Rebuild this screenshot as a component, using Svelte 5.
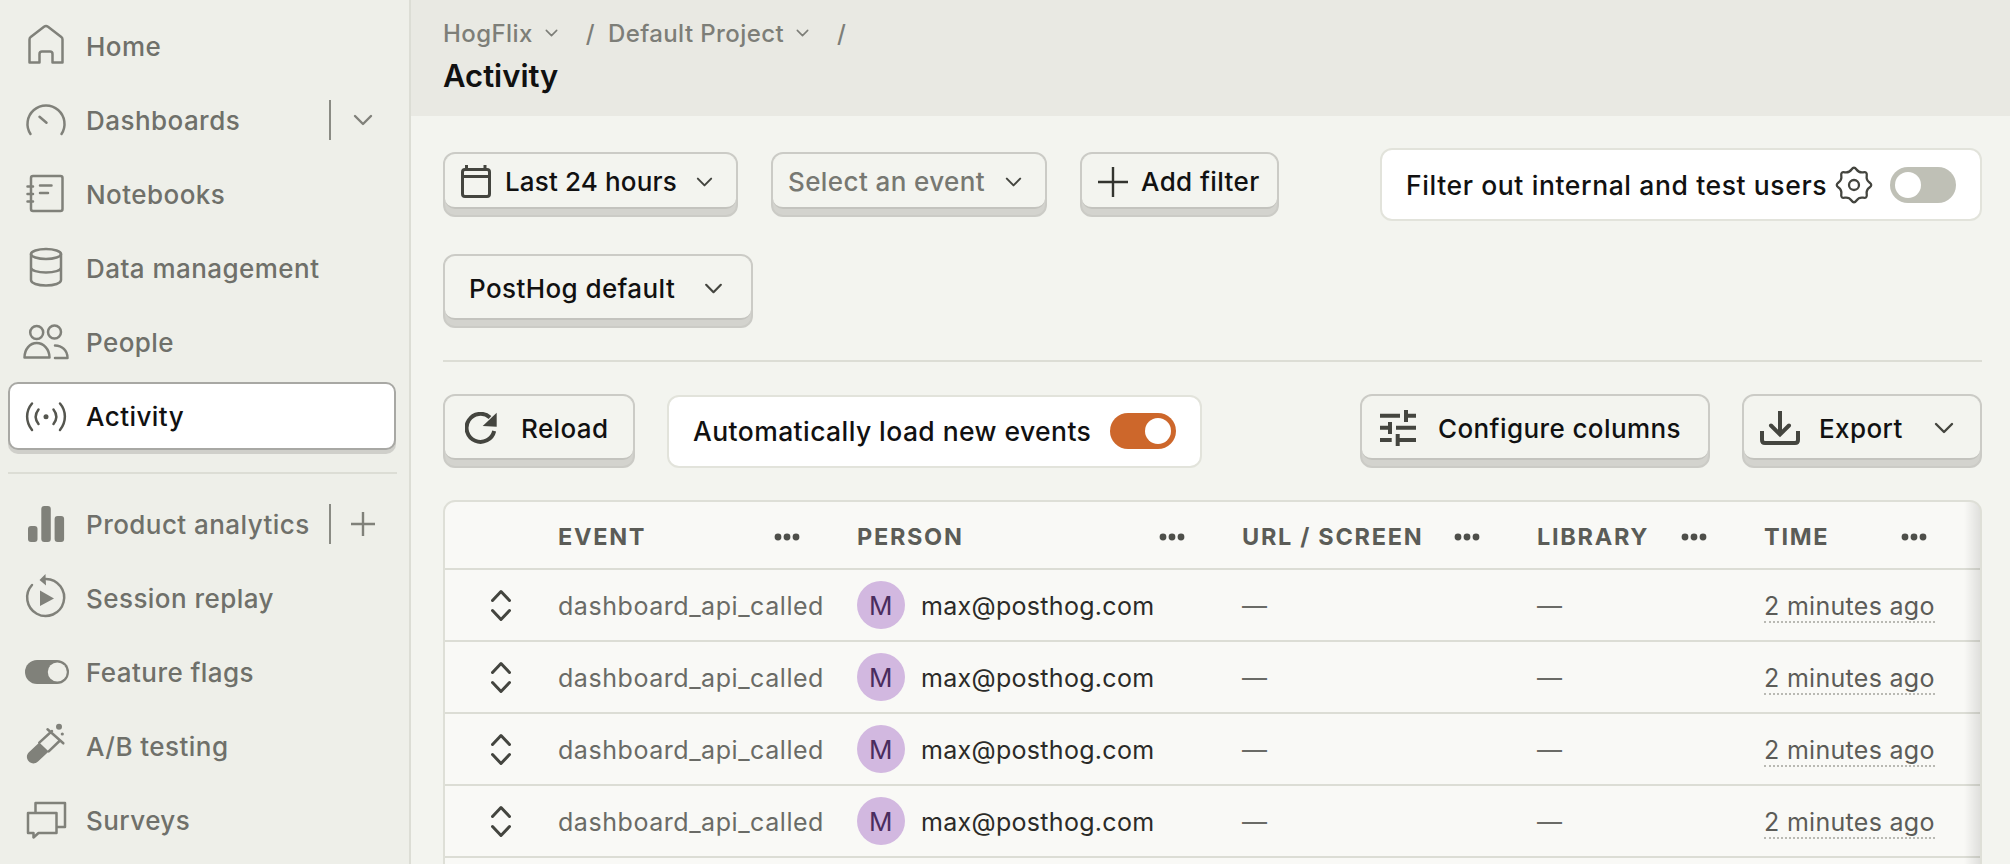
<script lang="ts">
	const rows = [0, 1, 2, 3];

	// wavy 8-lobe outline of the settings cog
	function gearPath(cx: number, cy: number, outer: number, inner: number) {
		const pts = [];
		for (let i = 0; i < 16; i++) {
			const a = (i * Math.PI) / 8 - Math.PI / 2;
			const r = i % 2 ? inner : outer;
			pts.push([cx + r * Math.cos(a), cy + r * Math.sin(a)]);
		}
		const mid = (a: number[], b: number[]) => [(a[0] + b[0]) / 2, (a[1] + b[1]) / 2];
		const start = mid(pts[15], pts[0]);
		let d = `M${start[0].toFixed(2)} ${start[1].toFixed(2)}`;
		pts.forEach((p, i) => {
			const m = mid(p, pts[(i + 1) % 16]);
			d += `Q${p[0].toFixed(2)} ${p[1].toFixed(2)} ${m[0].toFixed(2)} ${m[1].toFixed(2)}`;
		});
		return d + 'z';
	}

	const gear = gearPath(17, 18, 19, 13);
</script>

{#snippet chevron(cls = 'chev')}
	<svg class={cls} viewBox="0 0 20 12" fill="none" stroke="currentColor" stroke-width="2.4" stroke-linecap="round" stroke-linejoin="round"><path d="M2 2l8 8 8-8" /></svg>
{/snippet}

{#snippet dots()}
	<svg class="dots" viewBox="0 0 28 8" fill="currentColor"><circle cx="5" cy="4" r="3.4" /><circle cx="14" cy="4" r="3.4" /><circle cx="23" cy="4" r="3.4" /></svg>
{/snippet}

<div class="app">
	<aside class="sidebar">
		<nav class="nav">
			<a class="nav-link">
				<svg class="nav-icon" viewBox="0 0 44 44" fill="none"><path d="M5.5 38.5V15.5c0-1 .4-1.8 1.2-2.4L20 2.8c1.2-.9 2.8-.9 4 0l13.3 10.3c.8.6 1.2 1.4 1.2 2.4v23H28.5V30c0-1.4-1.1-2.5-2.5-2.5h-8c-1.4 0-2.5 1.1-2.5 2.5v8.5z" /></svg>
				<span>Home</span>
			</a>
			<a class="nav-link">
				<svg class="nav-icon" viewBox="0 0 44 44" fill="none"><path d="M6.5 36A18.5 18.5 0 1 1 37.5 36" /><path d="M15.5 18.7l7 6" /></svg>
				<span>Dashboards</span>
				<span class="nav-side">{@render chevron('side-chev')}</span>
			</a>
			<a class="nav-link">
				<svg class="nav-icon" viewBox="0 0 44 44" fill="none"><rect x="7" y="4" width="31.5" height="35" rx="2" /><path d="M16 13.5h11.5M16 21h8M3.5 14.5H9M3.5 22H9M3.5 29.5H9" /></svg>
				<span>Notebooks</span>
			</a>
			<a class="nav-link">
				<svg class="nav-icon" viewBox="0 0 44 44" fill="none"><ellipse cx="22" cy="8" rx="15" ry="5" /><path d="M7 8v26c0 3.200 6.700 5.500 15 5.500S37 37.200 37 34V8M7 21.500c0 3 6.700 5 15 5s15-2 15-5" /></svg>
				<span>Data management</span>
			</a>
			<a class="nav-link">
				<svg class="nav-icon" viewBox="0 0 44 44" fill="none"><circle cx="12.700" cy="12.500" r="6.500" /><circle cx="30.500" cy="12" r="6.500" /><path d="M.5 37.500C.5 29 6 23 12.700 23s12.800 6 12.800 14.500zM31 25.500c7 0 12.500 5 12.500 12.500H31" /></svg>
				<span>People</span>
			</a>
			<a class="nav-link active">
				<svg class="nav-icon" viewBox="0 0 44 44" fill="none"><path d="M8 9.500c-6.500 7.500-6.500 18.500 0 26.500M14.500 15.500c-3.500 4.500-3.500 10 0 14.500M36 9.500c6.500 7.500 6.500 18.500 0 26.500M29.500 15.500c3.500 4.500 3.500 10 0 14.500" /><circle class="solid" cx="22" cy="22.700" r="2.500" /></svg>
				<span>Activity</span>
			</a>
		</nav>
		<hr class="nav-rule" />
		<nav class="nav">
			<a class="nav-link">
				<svg class="nav-icon" viewBox="0 0 44 44"><rect class="solid" x="4" y="24" width="9.500" height="16" rx="3" /><rect class="solid" x="17.300" y="4" width="9.500" height="36" rx="3" /><rect class="solid" x="30.600" y="14" width="9.500" height="26" rx="3" /></svg>
				<span>Product analytics</span>
				<span class="nav-side">
					<svg class="side-plus" viewBox="0 0 24 24" fill="none" stroke="currentColor" stroke-width="2.400"><path d="M12 0v24M0 12h24" /></svg>
				</span>
			</a>
			<a class="nav-link">
				<svg class="nav-icon" viewBox="0 0 44 44" fill="none"><path d="M22 3A18.500 18.500 0 1 1 8 9" /><path class="solid" d="M21.500-2L15.500 4l6.500 5.500zM16 14.500L30 22.500 16 30z" /></svg>
				<span>Session replay</span>
			</a>
			<a class="nav-link">
				<svg class="nav-icon" viewBox="0 0 44 44"><rect class="solid" x="1" y="10" width="44" height="24" rx="12" /><circle class="knob" cx="33.300" cy="22" r="9.500" /></svg>
				<span>Feature flags</span>
			</a>
			<a class="nav-link">
				<svg class="nav-icon" viewBox="0 0 44 44" fill="none"><path class="solid" d="M15.300 18.600l9.400 8.800L14 37.500c-2.700 2.600-6.800 2.500-9.300-.2s-2.400-6.500.2-9z" /><path d="M15.300 18.600L28 7M24.700 27.400L36 16.500M23.500 5.300l15.800 14" /><circle class="solid" cx="35" cy="2.700" r="3" /><circle class="solid" cx="38.300" cy="10" r="1.600" /></svg>
				<span>A/B testing</span>
			</a>
			<a class="nav-link">
				<svg class="nav-icon" viewBox="0 0 44 44" fill="none"><path d="M4 15h28.500v20H14.500L9.500 39.500V35H4zM11.500 15V5H41v24h-8.500" /></svg>
				<span>Surveys</span>
			</a>
		</nav>
	</aside>

	<main class="main">
		<header class="top">
			<div class="crumbs">
				<span>HogFlix</span>
				{@render chevron('crumb-chev')}
				<span class="slash">/</span>
				<span>Default Project</span>
				{@render chevron('crumb-chev')}
				<span class="slash">/</span>
			</div>
			<h1>Activity</h1>
		</header>

		<div class="content">
			<div class="bar">
				<button class="btn date">
					<span class="face">
						<svg class="cal" viewBox="0 0 30 33" fill="none" stroke="currentColor" stroke-width="3"><rect x="1.500" y="4.500" width="27" height="27" rx="2.500" /><path d="M1.500 11.500h27M5.500 0v4M24 0v4" /></svg>
						<span class="label">Last 24 hours</span>
						{@render chevron()}
					</span>
				</button>
				<button class="btn event">
					<span class="face">
						<span class="label muted">Select an event</span>
						{@render chevron()}
					</span>
				</button>
				<button class="btn add">
					<span class="face">
						<svg class="plus" viewBox="0 0 30 30" fill="none" stroke="currentColor" stroke-width="2.400"><path d="M15 0v30M0 15h30" /></svg>
						<span class="label">Add filter</span>
					</span>
				</button>
				<label class="switch-box filter">
					<span>Filter out internal and test users</span>
					<svg class="gear" viewBox="0 0 34 36" fill="none" stroke="currentColor" stroke-width="2.300"><circle cx="17" cy="18" r="5" /><path d={gear} /></svg>
					<span class="toggle"></span>
				</label>
			</div>

			<div class="bar second">
				<button class="btn columns-select">
					<span class="face">
						<span class="label">PostHog default</span>
						{@render chevron('chev big')}
					</span>
				</button>
			</div>

			<hr class="rule" />

			<div class="bar actions">
				<button class="btn reload">
					<span class="face">
						<svg class="reload-icon" viewBox="0 0 32 33" fill="none"><path d="M25 5.500A14 14 0 1 0 29.200 19" stroke="currentColor" stroke-width="4" /><path d="M31.700.7V14.700L17.700 14z" fill="currentColor" /></svg>
						<span class="label">Reload</span>
					</span>
				</button>
				<label class="switch-box auto">
					<span>Automatically load new events</span>
					<span class="toggle on"></span>
				</label>
				<button class="btn configure">
					<span class="face">
						<svg class="sliders" viewBox="0 0 36 36" fill="none" stroke="currentColor" stroke-width="4"><path d="M0 5.700h20M26 0v12M27.700 5.700H36M0 17.700h8.300M10 12v12M16 17.700h20M0 30h11.700M17.700 24v12M19.300 30H36" /></svg>
						<span class="label">Configure columns</span>
					</span>
				</button>
				<button class="btn export">
					<span class="face">
						<svg class="export-icon" viewBox="0 0 40 35" fill="none" stroke="currentColor" stroke-width="4"><path d="M20 0v24" /><path d="M11 14.500l9 9 9-9" stroke-linecap="round" /><path d="M2 20v9c0 2 1 3 3 3h30c2 0 3-1 3-3v-9" /></svg>
						<span class="label">Export</span>
						{@render chevron()}
					</span>
				</button>
			</div>

			<div class="table-wrap">
				<table>
					<colgroup>
						<col style="width:97px" />
						<col style="width:299px" />
						<col style="width:385px" />
						<col style="width:295px" />
						<col style="width:227px" />
						<col />
					</colgroup>
					<thead>
						<tr>
							<th></th>
							<th><div class="th-in">EVENT {@render dots()}</div></th>
							<th><div class="th-in">PERSON {@render dots()}</div></th>
							<th><div class="th-in">URL / SCREEN {@render dots()}</div></th>
							<th><div class="th-in">LIBRARY {@render dots()}</div></th>
							<th class="last"><div class="th-in">TIME {@render dots()}</div></th>
						</tr>
					</thead>
					<tbody>
						{#each rows as row (row)}
							<tr>
								<td class="expand">
									<svg viewBox="0 0 20 33" fill="none" stroke="currentColor" stroke-width="3" stroke-linecap="round" stroke-linejoin="round"><path d="M1.500 11.500l8.500-9 8.500 9M1.500 21.500l8.500 9 8.500-9" /></svg>
								</td>
								<td class="event-name">dashboard_api_called</td>
								<td>
									<div class="person">
										<span class="avatar">M</span>
										<span class="email">max@posthog.com</span>
									</div>
								</td>
								<td class="dash">—</td>
								<td class="dash">—</td>
								<td><span class="ago">2 minutes ago</span></td>
							</tr>
						{/each}
					</tbody>
				</table>
				<div class="edge"></div>
			</div>
		</div>
	</main>
</div>

<style>
	:global(body) {
		margin: 0;
		background: #f3f4ef;
		font-family: Inter, 'Noto Sans', sans-serif;
	}

	.app {
		display: flex;
		height: 864px;
		overflow: hidden;
		font-size: 26px;
		color: #111;
	}

	/* sidebar */
	.sidebar {
		width: 411px;
		flex: none;
		box-sizing: border-box;
		padding: 9px 13px 0 8px;
		background: #eeefe9;
		border-right: 2px solid #dcddd5;
	}

	.nav {
		display: flex;
		flex-direction: column;
	}

	.nav-link {
		display: flex;
		align-items: center;
		box-sizing: border-box;
		height: 68px;
		margin: 3px 0;
		padding-left: 16px;
		gap: 18px;
		border-radius: 10px;
		color: #6f706a;
		font-weight: 500;
		letter-spacing: 0.45px;
	}

	.nav-link.active {
		background: #fff;
		color: #111;
		border: 2px solid #a8a8a4;
		padding-left: 14px;
		box-shadow: 0 4px 0 0 #cfcfca;
	}

	.nav-icon {
		width: 44px;
		height: 44px;
		flex: none;
		overflow: visible;
		stroke: #80817a;
		stroke-width: 2.500;
		stroke-linecap: round;
		stroke-linejoin: round;
	}

	.active .nav-icon {
		stroke: #55564f;
	}

	.nav-icon .solid {
		fill: #80817a;
		stroke: none;
	}

	.active .nav-icon .solid {
		fill: #55564f;
	}

	.nav-icon .knob {
		fill: #eeefe9;
		stroke: none;
	}

	.nav-side {
		display: flex;
		align-items: center;
		justify-content: center;
		box-sizing: border-box;
		position: absolute;
		left: 329px;
		width: 70px;
		height: 40px;
		border-left: 2px solid #8a8b84;
		color: #80817a;
	}

	.side-chev {
		width: 20px;
		height: 12px;
		margin-left: -4px;
	}

	.side-plus {
		width: 24px;
		height: 24px;
		margin-left: -4px;
	}

	.nav-rule {
		margin: 19px 0 13px;
		border: none;
		border-top: 2px solid #dcddd5;
		width: 389px;
	}

	/* header */
	.main {
		flex: 1;
		min-width: 0;
		display: flex;
		flex-direction: column;
	}

	.top {
		box-sizing: border-box;
		height: 116px;
		flex: none;
		padding: 18px 32px 0;
		background: #e9e9e3;
	}

	.crumbs {
		display: flex;
		align-items: center;
		height: 30px;
		font-size: 24px;
		font-weight: 500;
		letter-spacing: 0.4px;
		color: #7d7e78;
	}

	.crumb-chev {
		width: 13px;
		height: 8px;
		margin: 0 28px 0 12px;
	}

	.crumbs .slash {
		margin-right: 13px;
	}

	h1 {
		margin: 10px 0 0;
		font-size: 31px;
		line-height: 36px;
		font-weight: 600;
		color: #111;
	}

	/* content */
	.content {
		padding: 32px 28px 0 32px;
	}

	.bar {
		display: flex;
		align-items: center;
		gap: 33px;
	}

	.second {
		margin-top: 33px;
	}

	.actions {
		gap: 32px;
	}

	.rule {
		margin: 32px 0;
		border: none;
		border-top: 2px solid #dcddd5;
	}

	.btn {
		display: block;
		box-sizing: border-box;
		padding: 0 0 6px;
		font: inherit;
		font-weight: 500;
		letter-spacing: 0.4px;
		color: #111;
		background: #d3d3ce;
		border: 2px solid #cbcbc6;
		border-radius: 12px;
	}

	.face {
		display: flex;
		align-items: center;
		box-sizing: border-box;
		height: 100%;
		background: #f3f4ef;
		border-top: 2px solid #f3f4ef;
		border-bottom: 2px solid #c3c3be;
		border-radius: 10px;
		white-space: nowrap;
	}

	.date,
	.event,
	.add {
		height: 65px;
	}

	.date {
		width: 295px;
	}

	.date .face {
		padding-left: 16px;
	}

	.date .label {
		letter-spacing: 0.15px;
	}

	.cal {
		width: 30px;
		height: 33px;
		margin-right: 14px;
		color: #44453f;
	}

	.chev {
		width: 17px;
		height: 10px;
		color: #44453f;
		margin-left: auto;
	}

	.date .chev {
		margin-right: 23px;
	}

	.event {
		width: 276px;
	}

	.event .face {
		padding: 0 23px 0 15px;
	}

	.muted {
		color: #777872;
	}

	.add {
		width: 199px;
		margin-right: auto;
	}

	.add .face {
		padding-left: 16px;
	}

	.plus {
		width: 30px;
		height: 30px;
		margin-right: 13px;
		color: #33342f;
	}

	.columns-select {
		width: 310px;
		height: 74px;
	}

	.columns-select .face {
		padding: 0 28px 0 24px;
	}

	.chev.big {
		width: 19px;
		height: 11px;
	}

	.reload,
	.configure,
	.export {
		height: 74px;
	}

	.reload {
		width: 192px;
	}

	.reload .face {
		padding-left: 20px;
	}

	.reload-icon {
		width: 32px;
		height: 33px;
		margin-right: 24px;
		color: #44453f;
	}

	.configure {
		width: 350px;
		margin-left: auto;
	}

	.configure .face {
		padding-left: 18px;
	}

	.sliders {
		width: 36px;
		height: 36px;
		margin-right: 22px;
		color: #44453f;
	}

	.export {
		width: 240px;
	}

	.export .face {
		padding: 0 26px 0 16px;
	}

	.export-icon {
		width: 40px;
		height: 35px;
		margin-right: 19px;
		color: #44453f;
	}

	.export .chev {
		width: 20px;
		height: 12px;
	}

	.switch-box {
		display: flex;
		align-items: center;
		box-sizing: border-box;
		height: 73px;
		background: #fff;
		border: 2px solid #e2e3db;
		border-radius: 12px;
		padding: 0 24px;
		white-space: nowrap;
		font-weight: 500;
		font-size: 26.5px;
		letter-spacing: 0.6px;
	}

	.filter {
		width: 602px;
	}

	.gear {
		width: 34px;
		height: 36px;
		margin-left: 10px;
		color: #44453f;
		overflow: visible;
	}

	.toggle {
		position: relative;
		width: 66px;
		height: 36px;
		margin-left: auto;
		border-radius: 18px;
		background: #bfc0b6;
	}

	.toggle::after {
		content: '';
		position: absolute;
		top: 5px;
		left: 5px;
		width: 26px;
		height: 26px;
		border-radius: 50%;
		background: #fff;
	}

	.toggle.on {
		background: #cd672b;
	}

	.toggle.on::after {
		left: auto;
		right: 5px;
	}

	.auto {
		width: 535px;
		padding: 0 24px;
		letter-spacing: 0.42px;
	}

	/* table */
	.table-wrap {
		position: relative;
		margin-top: 32px;
		padding-bottom: 40px;
		border: 2px solid #dedfd7;
		border-radius: 12px 12px 0 0;
		background: #f9f9f6;
		overflow: hidden;
	}

	table {
		width: 100%;
		table-layout: fixed;
		border-collapse: separate;
		border-spacing: 0;
	}

	th {
		box-sizing: border-box;
		height: 68px;
		padding: 3px 40px 0 16px;
		border-bottom: 2px solid #dcddd5;
		text-align: left;
		font-size: 23.5px;
		font-weight: 700;
		letter-spacing: 1.7px;
		color: #5b5c57;
	}

	th.last {
		padding-right: 52px;
	}

	.th-in {
		display: flex;
		align-items: center;
		justify-content: space-between;
		white-space: nowrap;
	}

	.dots {
		width: 28px;
		height: 8px;
		color: #4e4f4a;
	}

	td {
		box-sizing: border-box;
		height: 72px;
		padding: 2px 16px 0;
		border-bottom: 2px solid #dcddd5;
		white-space: nowrap;
		font-size: 25px;
		letter-spacing: 0.3px;
		color: #2b2b28;
	}

	.expand {
		padding: 0 0 0 46px;
		color: #44453f;
	}

	.expand svg {
		display: block;
		width: 20px;
		height: 33px;
	}

	.event-name {
		color: #6a6b66;
		letter-spacing: 0.55px;
	}

	.person {
		display: flex;
		align-items: center;
		gap: 16px;
		margin-top: -2px;
	}

	.email {
		padding-top: 2px;
	}

	.avatar {
		display: flex;
		align-items: center;
		justify-content: center;
		width: 48px;
		height: 48px;
		border-radius: 50%;
		background: #d2b8e0;
		color: #4a2d5e;
		font-size: 26px;
	}

	.dash {
		color: #6a6b66;
	}

	.ago {
		color: #5c5c58;
		border-bottom: 2px dotted #b9b9b3;
	}

	.edge {
		position: absolute;
		top: 0;
		right: 0;
		bottom: 0;
		width: 16px;
		background: linear-gradient(to right, rgba(0, 0, 0, 0), rgba(0, 0, 0, 0.1));
	}
</style>
